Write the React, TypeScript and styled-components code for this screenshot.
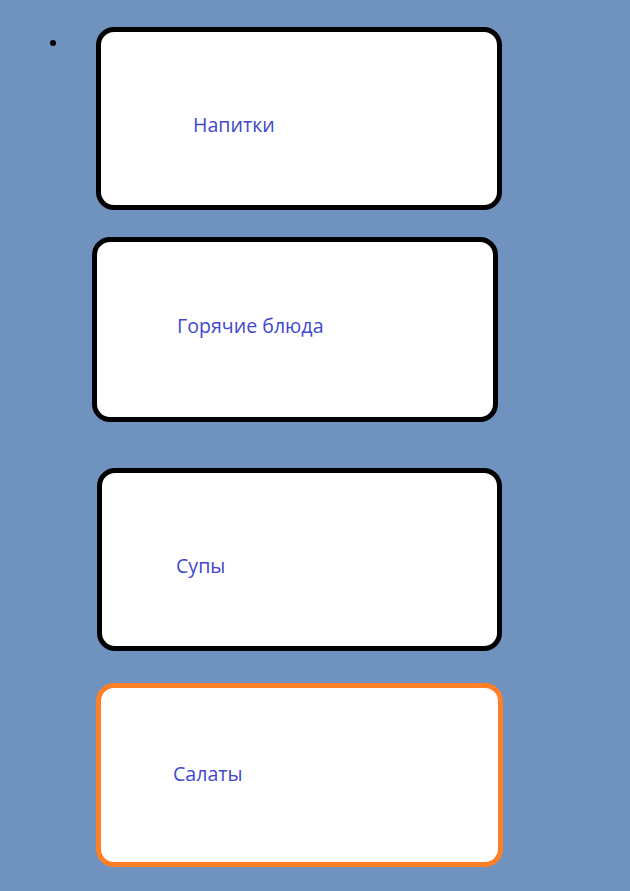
import React from "react";
import styled, { createGlobalStyle } from "styled-components";

const GlobalStyle = createGlobalStyle`
  html, body {
    margin: 0;
    padding: 0;
    background: #7092be;
  }
  body {
    font-family: "Open Sans", "Noto Sans", sans-serif;
  }
`;

const Page = styled.div`
  width: 630px;
  height: 891px;
  background: #7092be;
  box-sizing: border-box;
  padding: 27px 0 0 50px;
  display: flex;
  align-items: flex-start;
  overflow: hidden;
`;

const Bullet = styled.span`
  flex: none;
  width: 6px;
  height: 6px;
  margin-top: 13px;
  border-radius: 50%;
  background: #000;
`;

const CardList = styled.ul`
  list-style: none;
  margin: 0 0 0 36px;
  padding: 0;
  display: flex;
  flex-direction: column;
`;

const Card = styled.li<{
  $x: number;
  $gap: number;
  $w: number;
  $h: number;
  $accent?: boolean;
  $labelX: number;
  $labelY: number;
}>`
  box-sizing: border-box;
  width: ${(p) => p.$w}px;
  height: ${(p) => p.$h}px;
  margin-left: ${(p) => p.$x}px;
  margin-top: ${(p) => p.$gap}px;
  background: #ffffff;
  border: 5px solid ${(p) => (p.$accent ? "#ff7f27" : "#000000")};
  border-radius: 18px;
  display: flex;
  align-items: flex-start;
  padding-left: ${(p) => p.$labelX - 5}px;
  padding-top: ${(p) => p.$labelY - 5}px;
`;

const Label = styled.span`
  font-family: "Open Sans", "Noto Sans", sans-serif;
  font-size: 19.6px;
  line-height: 26px;
  color: #3f48cc;
  white-space: nowrap;
`;

type Item = {
  label: string;
  x: number;
  gap: number;
  w: number;
  h: number;
  labelX: number;
  labelY: number;
  accent?: boolean;
};

const items: Item[] = [
  { label: "Напитки", x: 4, gap: 0, w: 406, h: 183, labelX: 97, labelY: 85 },
  { label: "Горячие блюда", x: 0, gap: 27, w: 406, h: 185, labelX: 85, labelY: 76 },
  { label: "Супы", x: 5, gap: 46, w: 405, h: 183, labelX: 79, labelY: 85 },
  { label: "Салаты", x: 4, gap: 32, w: 407, h: 184, labelX: 77, labelY: 78, accent: true },
];

export default function App() {
  return (
    <>
      <GlobalStyle />
      <Page>
        <Bullet />
        <CardList>
          {items.map((it) => (
            <Card
              key={it.label}
              $x={it.x}
              $gap={it.gap}
              $w={it.w}
              $h={it.h}
              $labelX={it.labelX}
              $labelY={it.labelY}
              $accent={it.accent}
            >
              <Label>{it.label}</Label>
            </Card>
          ))}
        </CardList>
      </Page>
    </>
  );
}
